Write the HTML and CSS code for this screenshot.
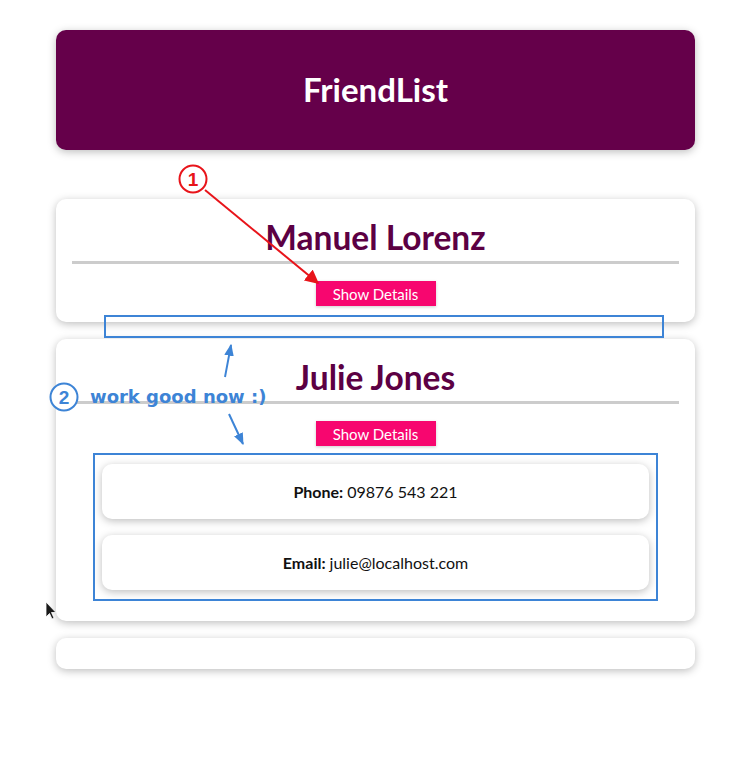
FILE: index.html
```html
<!DOCTYPE html>
<html lang="en">
<head>
<meta charset="utf-8">
<title>FriendList</title>
<link rel="stylesheet" href="styles.css">
</head>
<body>
<div class="app">
  <header class="header">
    <h1 class="title">FriendList</h1>
  </header>
  <ul class="friends">
    <li class="card">
      <h2 class="name">Manuel Lorenz</h2>
      <div class="rule"></div>
      <button class="btn">Show Details</button>
    </li>
    <li class="card">
      <h2 class="name">Julie Jones</h2>
      <div class="rule"></div>
      <button class="btn">Show Details</button>
      <ul class="details">
        <li class="detail"><strong>Phone:</strong> 09876 543 221</li>
        <li class="detail"><strong>Email:</strong> julie@localhost.com</li>
      </ul>
    </li>
    <li class="card empty"></li>
  </ul>
</div>

<svg class="annot" width="749" height="769" viewBox="0 0 749 769" xmlns="http://www.w3.org/2000/svg">
  <defs>
    <marker id="ar" viewBox="0 0 10 10" refX="9" refY="5" markerWidth="7" markerHeight="7" orient="auto">
      <path d="M0 0 L10 5 L0 10 Z" fill="#e8141a"/>
    </marker>
    <marker id="ab" viewBox="0 0 10 10" refX="9" refY="5" markerWidth="6" markerHeight="7" orient="auto">
      <path d="M0 1 L10 5 L0 9 Z" fill="#3d84d6"/>
    </marker>
  </defs>
  <circle cx="193" cy="179" r="13.5" fill="#fff" stroke="#e8141a" stroke-width="2"/>
  <text x="193" y="186" class="num red">1</text>
  <line x1="205" y1="190" x2="318" y2="283" stroke="#e8141a" stroke-width="2" marker-end="url(#ar)"/>

  <rect x="105" y="316" width="558" height="21" fill="none" stroke="#3d84d6" stroke-width="2"/>
  <rect x="94" y="454" width="563" height="146" fill="none" stroke="#3d84d6" stroke-width="2"/>

  <circle cx="64" cy="397" r="13.5" fill="#fff" stroke="#3d84d6" stroke-width="2"/>
  <text x="64" y="404" class="num blue">2</text>
  <text x="90" y="403" class="note">work good now :)</text>
  <line x1="225" y1="377" x2="231" y2="345" stroke="#3d84d6" stroke-width="2" marker-end="url(#ab)"/>
  <line x1="229" y1="414" x2="243" y2="444" stroke="#3d84d6" stroke-width="2" marker-end="url(#ab)"/>

  <path d="M46 602 L46 617 L49.5 613.5 L52 619 L54 618 L51.5 612.5 L56 612.5 Z" fill="#1a1a1a" stroke="#fff" stroke-width="0.8"/>
</svg>
</body>
</html>
```

FILE: styles.css
```css
html, body {
  margin: 0;
  padding: 0;
  background: #ffffff;
}

body {
  font-family: "Lato", "Noto Sans", sans-serif;
  min-height: 769px;
}

.app {
  width: 639px;
  margin: 30px 0 0 56px;
  padding-bottom: 40px;
}

.header {
  height: 120px;
  background: #65004a;
  border-radius: 10px;
  box-shadow: 0 2px 8px rgba(0, 0, 0, 0.26);
  display: flex;
  align-items: center;
  justify-content: center;
}

.title {
  margin: 0 0 3px 0;
  color: #ffffff;
  font-size: 33px;
  font-weight: 700;
}

.friends {
  list-style: none;
  margin: 49px 0 0 0;
  padding: 0;
  display: flex;
  flex-direction: column;
  gap: 17px;
}

.card {
  background: #ffffff;
  border-radius: 10px;
  box-shadow: 0 2px 8px rgba(0, 0, 0, 0.26);
  padding: 16px;
  display: flex;
  flex-direction: column;
  align-items: center;
}

.card.empty {
  padding: 0;
  height: 31px;
}

.name {
  margin: 4px 0 0 0;
  height: 37px;
  line-height: 37px;
  font-size: 33.5px;
  font-weight: 700;
  color: #5c0043;
}

.rule {
  align-self: stretch;
  height: 3px;
  background: #cccccc;
  margin: 5px 0 17px 0;
}

.btn {
  border: none;
  background: #f7066f;
  color: #ffffff;
  font-family: "Lato", "Noto Sans", sans-serif;
  font-weight: 400;
  font-size: 15px;
  width: 120px;
  height: 25px;
  padding: 0;
  box-shadow: 0 1px 3px rgba(0, 0, 0, 0.2);
}

.details {
  list-style: none;
  align-self: stretch;
  margin: 18px 30px 15px 30px;
  padding: 0;
  display: flex;
  flex-direction: column;
  gap: 16px;
}

.detail {
  height: 55px;
  border-radius: 10px;
  box-shadow: 0 2px 8px rgba(0, 0, 0, 0.26);
  display: flex;
  align-items: center;
  justify-content: center;
  font-size: 16px;
  color: #111111;
}

.detail strong {
  font-weight: 700;
  margin-right: 4px;
}

.annot {
  position: absolute;
  left: 0;
  top: 0;
  pointer-events: none;
}

.num {
  font-family: "Liberation Sans", sans-serif;
  font-weight: 700;
  font-size: 19px;
  text-anchor: middle;
}

.num.red {
  fill: #e8141a;
}

.num.blue {
  fill: #3d84d6;
}

.note {
  font-family: "DejaVu Sans", sans-serif;
  font-weight: 700;
  font-size: 18px;
  fill: #3d84d6;
}
```
